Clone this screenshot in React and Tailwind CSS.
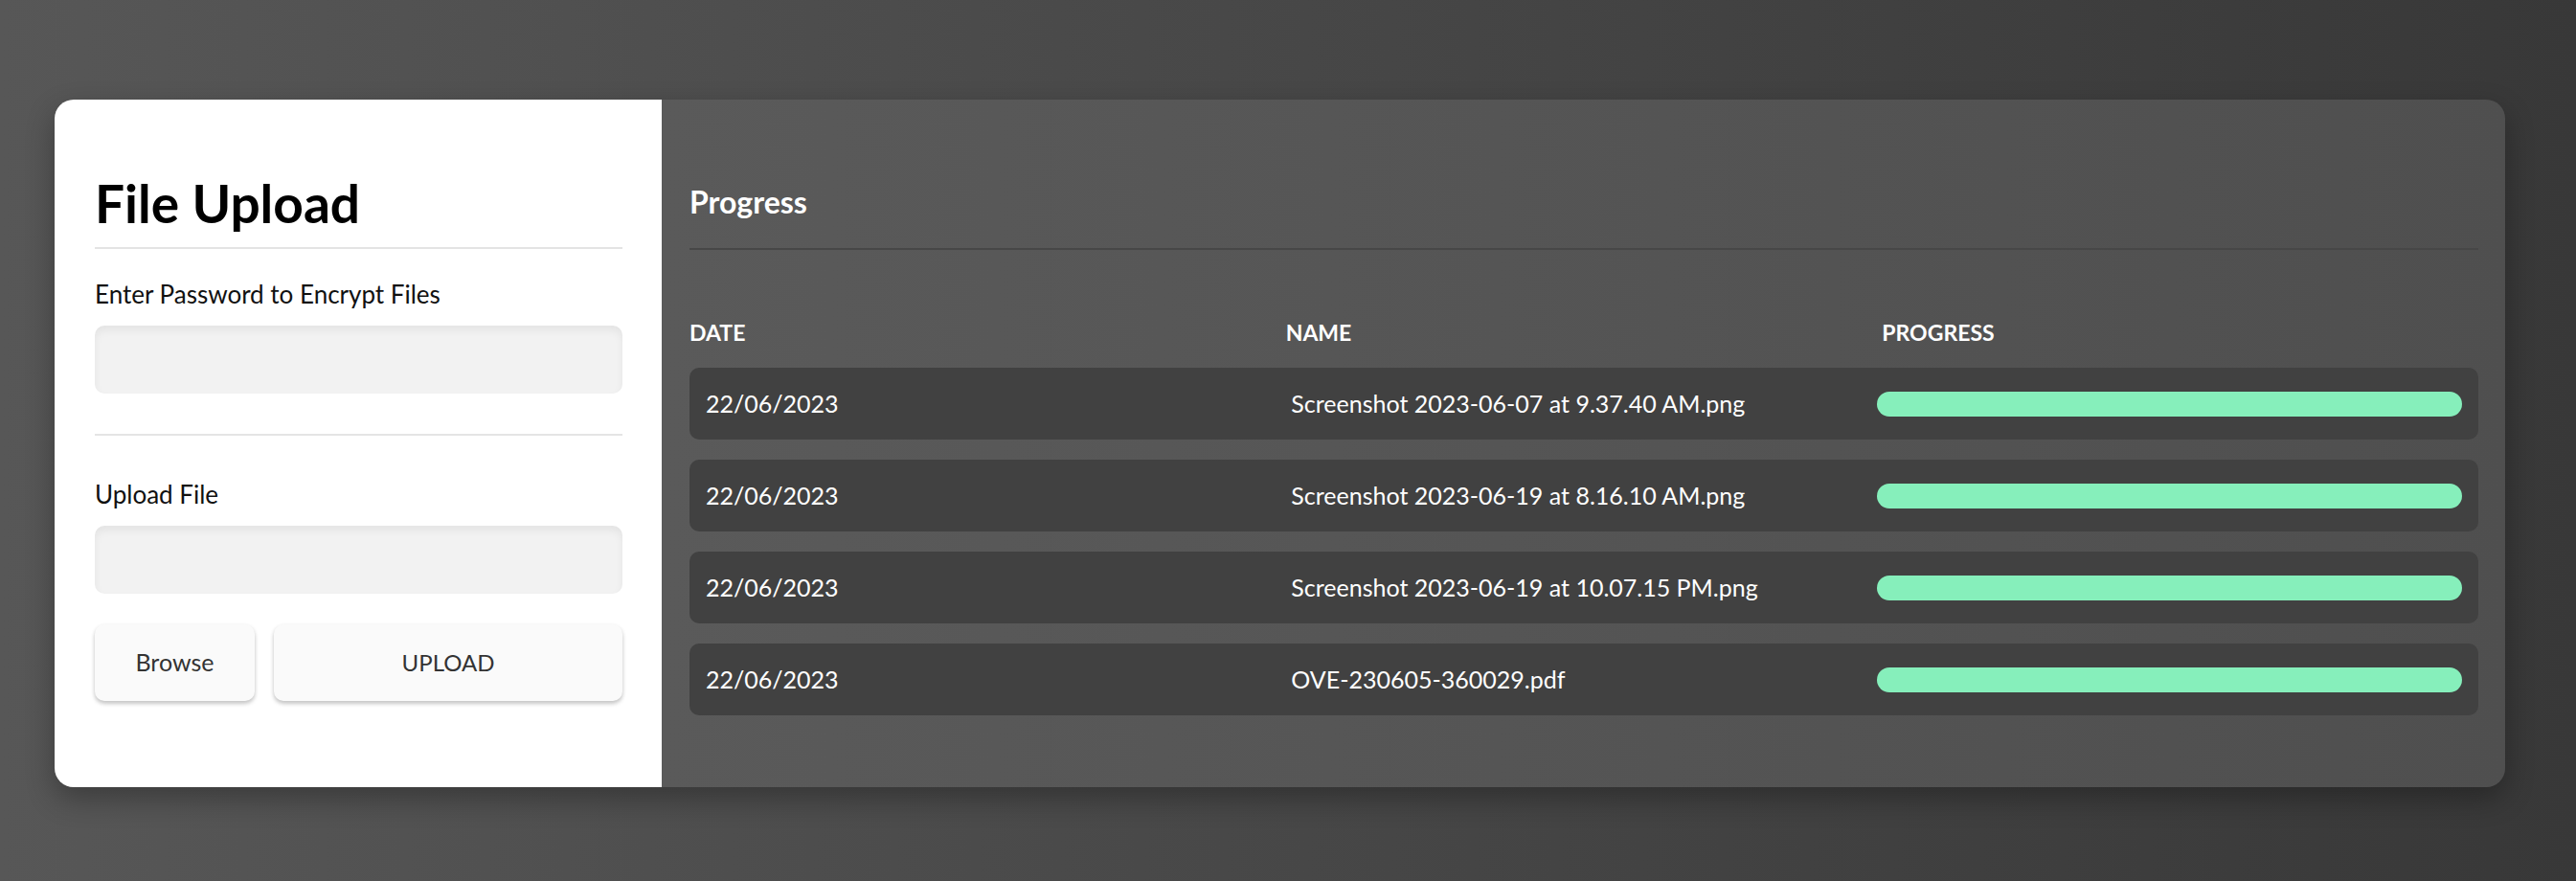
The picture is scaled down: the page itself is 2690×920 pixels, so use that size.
import React from "react";

const rows = [
  { date: "22/06/2023", name: "Screenshot 2023-06-07 at 9.37.40 AM.png", progress: 100 },
  { date: "22/06/2023", name: "Screenshot 2023-06-19 at 8.16.10 AM.png", progress: 100 },
  { date: "22/06/2023", name: "Screenshot 2023-06-19 at 10.07.15 PM.png", progress: 100 },
  { date: "22/06/2023", name: "OVE-230605-360029.pdf", progress: 100 },
];

export default function App() {
  return (
    <div
      className="w-[2690px] h-[920px] bg-linear-to-r from-[#575757] to-[#383838] pt-[104px] pl-[57px]"
      style={{ fontFamily: "Lato, 'Noto Sans', sans-serif" }}
    >
      <div className="w-[2559px] h-[718px] flex rounded-[20px] overflow-hidden shadow-[0_12px_30px_rgba(0,0,0,0.3)]">
        {/* Left panel */}
        <div className="w-[634px] bg-white pl-[42px] pr-[41px] pt-[81px] flex flex-col">
          <h1 className="text-[55px] leading-[54px] font-bold text-black">File Upload</h1>
          <div className="mt-[19px] h-[2px] bg-[#e4e4e4]" />
          <label className="mt-[34px] text-[26px] leading-[26px] text-[#111]">Enter Password to Encrypt Files</label>
          <div className="mt-[20px] h-[71px] rounded-[10px] bg-[#f2f2f2] shadow-[inset_0_5px_8px_rgba(0,0,0,0.06)]" />
          <div className="mt-[42px] h-[2px] bg-[#e4e4e4]" />
          <label className="mt-[48px] text-[26px] leading-[26px] text-[#111]">Upload File</label>
          <div className="mt-[20px] h-[71px] rounded-[10px] bg-[#f2f2f2] shadow-[inset_0_5px_8px_rgba(0,0,0,0.06)]" />
          <div className="mt-[32px] flex gap-[20px]">
            <button className="w-[167px] h-[80px] rounded-[10px] bg-[#fafafa] text-[25px] text-[#333] shadow-[0_3px_4px_rgba(0,0,0,0.2),0_1px_5px_rgba(0,0,0,0.06)]">
              Browse
            </button>
            <button className="flex-1 h-[80px] rounded-[10px] bg-[#fafafa] text-[24px] text-[#333] shadow-[0_3px_4px_rgba(0,0,0,0.2),0_1px_5px_rgba(0,0,0,0.06)]">
              UPLOAD
            </button>
          </div>
        </div>

        {/* Right panel */}
        <div className="flex-1 bg-linear-to-r from-[#5a5a5a] to-[#4f4f4f] pl-[29px] pr-[28px] pt-[91px] flex flex-col">
          <h2 className="text-[32px] leading-[32px] font-bold text-white">Progress</h2>
          <div className="mt-[32px] h-[2px] bg-[#474747]" />
          <div className="mt-[75px] grid grid-cols-3 text-[23px] leading-[22px] font-bold text-white">
            <div>DATE</div>
            <div>NAME</div>
            <div>PROGRESS</div>
          </div>
          <div className="mt-[26px] flex flex-col gap-[21px]">
            {rows.map((r, i) => (
              <div
                key={i}
                className="h-[75px] rounded-[10px] bg-[#414141] px-[17px] grid grid-cols-3 items-center text-[25px] text-white"
              >
                <div>{r.date}</div>
                <div>{r.name}</div>
                <div className="h-[26px]">
                  <div
                    className="h-full rounded-full bg-[#86efbb]"
                    style={{ width: `${r.progress}%` }}
                  />
                </div>
              </div>
            ))}
          </div>
        </div>
      </div>
    </div>
  );
}
